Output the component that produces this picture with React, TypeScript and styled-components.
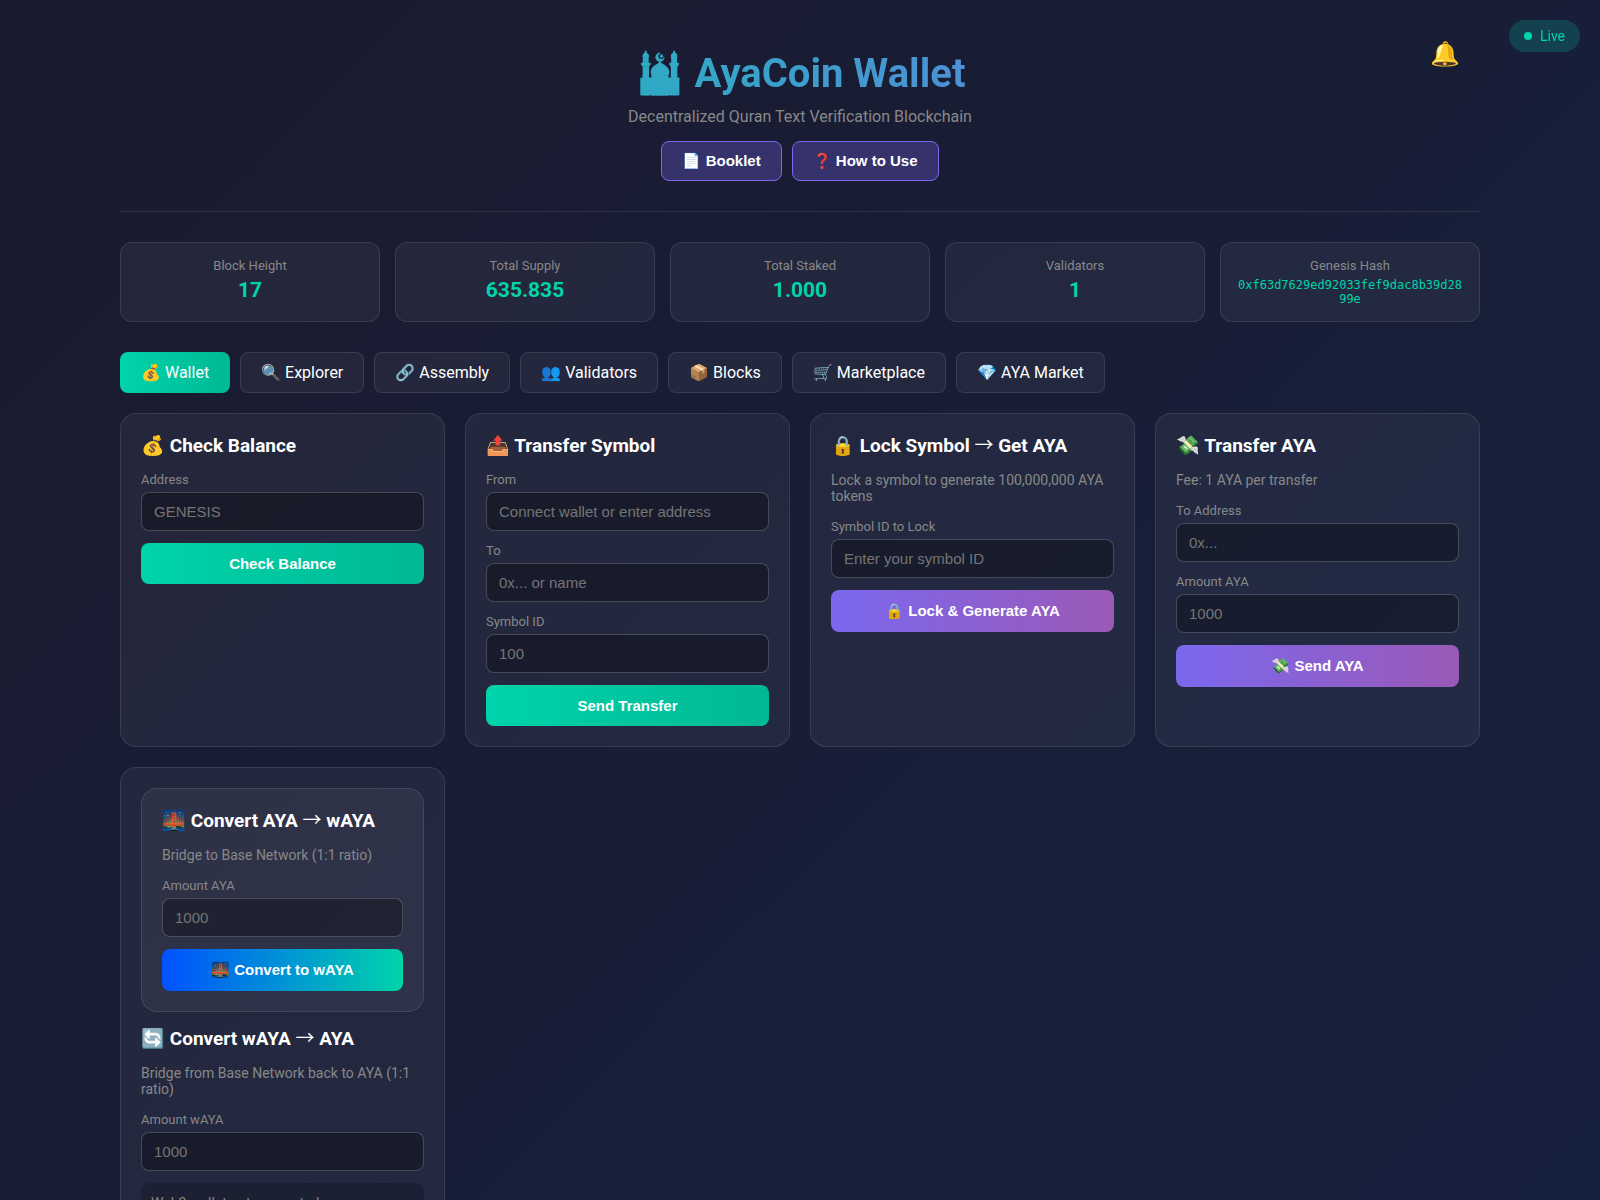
import React, { useId, useState } from "react";
import styled, { createGlobalStyle, css } from "styled-components";

const GlobalStyle = createGlobalStyle`
  * {
    box-sizing: border-box;
    margin: 0;
    padding: 0;
  }
  body {
    min-height: 100vh;
    background: linear-gradient(135deg, #1a1a2e 0%, #16213e 100%);
    color: #fff;
    font-family: Roboto, "Liberation Sans", sans-serif;
    font-size: 16px;
  }
`;

const Container = styled.div`
  max-width: 1400px;
  margin: 0 auto;
  padding: 20px;
`;

const LiveBadge = styled.div`
  position: fixed;
  top: 20px;
  right: 20px;
  display: flex;
  align-items: center;
  gap: 8px;
  padding: 8px 15px;
  border-radius: 20px;
  background: rgba(0, 212, 170, 0.2);
  color: #00d4aa;
  font-size: 14px;
  line-height: 16px;
`;

const LiveDot = styled.span`
  width: 8px;
  height: 8px;
  border-radius: 50%;
  background: #00d4aa;
`;

const Header = styled.header`
  position: relative;
  padding: 30px 0;
  border-bottom: 1px solid rgba(255, 255, 255, 0.1);
  text-align: center;
`;

const BellButton = styled.button`
  position: absolute;
  top: 20px;
  right: 20px;
  border: none;
  background: none;
  color: #fff;
  font-family: Roboto, sans-serif;
  font-size: 24px;
  line-height: 28px;
  cursor: pointer;
`;

const Title = styled.h1`
  margin-bottom: 10px;
  background: linear-gradient(90deg, #00d4aa, #7b68ee);
  background-clip: text;
  -webkit-background-clip: text;
  -webkit-text-fill-color: transparent;
  font-size: 40px;
  line-height: 47px;
`;

const Subtitle = styled.p`
  color: #888;
  line-height: 19px;
`;

const HeaderLinks = styled.div`
  display: flex;
  justify-content: center;
  gap: 10px;
  margin-top: 15px;
`;

const HeaderButton = styled.button`
  padding: 10px 20px;
  border: 1px solid #7b68ee;
  border-radius: 8px;
  background: rgba(123, 104, 238, 0.3);
  color: #fff;
  font-family: "Liberation Sans", Arial, sans-serif;
  font-size: 15px;
  font-weight: 600;
  line-height: 18px;
  cursor: pointer;
`;

const Stats = styled.section`
  display: grid;
  grid-template-columns: repeat(auto-fit, minmax(200px, 1fr));
  gap: 15px;
  margin: 30px 0;
`;

const Stat = styled.div`
  padding: 15px;
  border: 1px solid rgba(255, 255, 255, 0.1);
  border-radius: 12px;
  background: rgba(255, 255, 255, 0.05);
  text-align: center;
`;

const StatLabel = styled.div`
  margin-bottom: 5px;
  color: #888;
  font-size: 13px;
  line-height: 15px;
`;

const StatValue = styled.div<{ $hash?: boolean }>`
  color: #00d4aa;
  font-size: 21px;
  font-weight: 700;
  line-height: 24px;
  ${(p) =>
    p.$hash &&
    css`
      font-family: "DejaVu Sans Mono", monospace;
      font-size: 12px;
      font-weight: 400;
      line-height: 14px;
      word-break: break-all;
    `}
`;

const Tabs = styled.nav`
  display: flex;
  flex-wrap: wrap;
  gap: 10px;
  margin-bottom: 20px;
`;

const Tab = styled.button<{ $active: boolean }>`
  padding: 10px 20px;
  border: 1px solid ${(p) => (p.$active ? "transparent" : "rgba(255, 255, 255, 0.1)")};
  border-radius: 8px;
  background: ${(p) =>
    p.$active
      ? "linear-gradient(90deg, #00d4aa, #00b894) border-box"
      : "rgba(255, 255, 255, 0.05)"};
  color: #fff;
  font-family: Roboto, sans-serif;
  font-size: 16px;
  line-height: 19px;
  cursor: pointer;
`;

const CardGrid = styled.main`
  display: grid;
  grid-template-columns: repeat(auto-fill, minmax(300px, 1fr));
  gap: 20px;
`;

const Card = styled.section`
  padding: 20px;
  border: 1px solid rgba(255, 255, 255, 0.1);
  border-radius: 16px;
  background: rgba(255, 255, 255, 0.05);
  & > & {
    margin-bottom: 15px;
  }
`;

const CardTitle = styled.h2`
  margin-bottom: 15px;
  font-size: 19px;
  line-height: 23px;
`;

const Arrow = styled.span`
  font-family: "Noto Sans CJK SC", sans-serif;
  font-weight: 400;
  line-height: 0;
`;

const CardNote = styled.p`
  margin-bottom: 15px;
  color: #888;
  font-size: 14px;
  line-height: 16px;
`;

const FieldLabel = styled.label`
  display: block;
  margin-bottom: 5px;
  color: #888;
  font-size: 13px;
  line-height: 15px;
`;

const FieldInput = styled.input`
  display: block;
  width: 100%;
  margin-bottom: 12px;
  padding: 10px 12px;
  border: 1px solid rgba(255, 255, 255, 0.2);
  border-radius: 8px;
  background: rgba(0, 0, 0, 0.3);
  color: #fff;
  font-family: "Liberation Sans", Arial, sans-serif;
  font-size: 15px;
  line-height: 17px;
`;

const gradients = {
  green: "linear-gradient(90deg, #00d4aa, #00b894)",
  purple: "linear-gradient(90deg, #7b68ee, #9b59b6)",
  blue: "linear-gradient(90deg, #0052ff, #00d4aa)",
};

const ActionButton = styled.button<{ $tone: keyof typeof gradients }>`
  display: block;
  width: 100%;
  padding: 12px;
  border: none;
  border-radius: 8px;
  background: ${(p) => gradients[p.$tone]};
  color: #fff;
  font-family: "Liberation Sans", Arial, sans-serif;
  font-size: 15px;
  font-weight: 600;
  cursor: pointer;
`;

const WalletStatus = styled.div`
  margin-bottom: 12px;
  padding: 12px 10px;
  border-radius: 8px;
  background: rgba(0, 0, 0, 0.2);
  color: #888;
  font-size: 14px;
  line-height: 16px;
`;

function Field({ label, placeholder }: { label: string; placeholder: string }) {
  const id = useId();
  return (
    <>
      <FieldLabel htmlFor={id}>{label}</FieldLabel>
      <FieldInput id={id} type="text" placeholder={placeholder} />
    </>
  );
}

const stats = [
  { label: "Block Height", value: "17" },
  { label: "Total Supply", value: "635.835" },
  { label: "Total Staked", value: "1.000" },
  { label: "Validators", value: "1" },
  { label: "Genesis Hash", value: "0xf63d7629ed92033fef9dac8b39d2899e", hash: true },
];

const tabs = [
  "💰 Wallet",
  "🔍 Explorer",
  "🔗 Assembly",
  "👥 Validators",
  "📦 Blocks",
  "🛒 Marketplace",
  "💎 AYA Market",
];

export default function App() {
  const [activeTab, setActiveTab] = useState(tabs[0]);

  return (
    <>
      <GlobalStyle />
      <LiveBadge>
        <LiveDot />
        Live
      </LiveBadge>
      <Container>
        <Header>
          <BellButton type="button" aria-label="Notifications">🔔</BellButton>
          <Title>🕌 AyaCoin Wallet</Title>
          <Subtitle>Decentralized Quran Text Verification Blockchain</Subtitle>
          <HeaderLinks>
            <HeaderButton type="button">📄 Booklet</HeaderButton>
            <HeaderButton type="button">❓ How to Use</HeaderButton>
          </HeaderLinks>
        </Header>

        <Stats>
          {stats.map((s) => (
            <Stat key={s.label}>
              <StatLabel>{s.label}</StatLabel>
              <StatValue $hash={s.hash}>{s.value}</StatValue>
            </Stat>
          ))}
        </Stats>

        <Tabs>
          {tabs.map((tab) => (
            <Tab key={tab} type="button" $active={tab === activeTab} onClick={() => setActiveTab(tab)}>
              {tab}
            </Tab>
          ))}
        </Tabs>

        <CardGrid>
          <Card>
            <CardTitle>💰 Check Balance</CardTitle>
            <Field label="Address" placeholder="GENESIS" />
            <ActionButton type="button" $tone="green">Check Balance</ActionButton>
          </Card>

          <Card>
            <CardTitle>📤 Transfer Symbol</CardTitle>
            <Field label="From" placeholder="Connect wallet or enter address" />
            <Field label="To" placeholder="0x... or name" />
            <Field label="Symbol ID" placeholder="100" />
            <ActionButton type="button" $tone="green">Send Transfer</ActionButton>
          </Card>

          <Card>
            <CardTitle>🔒 Lock Symbol <Arrow>→</Arrow> Get AYA</CardTitle>
            <CardNote>Lock a symbol to generate 100,000,000 AYA tokens</CardNote>
            <Field label="Symbol ID to Lock" placeholder="Enter your symbol ID" />
            <ActionButton type="button" $tone="purple">🔒 Lock &amp; Generate AYA</ActionButton>
          </Card>

          <Card>
            <CardTitle>💸 Transfer AYA</CardTitle>
            <CardNote>Fee: 1 AYA per transfer</CardNote>
            <Field label="To Address" placeholder="0x..." />
            <Field label="Amount AYA" placeholder="1000" />
            <ActionButton type="button" $tone="purple">💸 Send AYA</ActionButton>
          </Card>

          <Card>
            <Card>
              <CardTitle>🌉 Convert AYA <Arrow>→</Arrow> wAYA</CardTitle>
              <CardNote>Bridge to Base Network (1:1 ratio)</CardNote>
              <Field label="Amount AYA" placeholder="1000" />
              <ActionButton type="button" $tone="blue">🌉 Convert to wAYA</ActionButton>
            </Card>
            <CardTitle>🔄 Convert wAYA <Arrow>→</Arrow> AYA</CardTitle>
            <CardNote>Bridge from Base Network back to AYA (1:1 ratio)</CardNote>
            <Field label="Amount wAYA" placeholder="1000" />
            <WalletStatus>Web3 wallet not connected</WalletStatus>
            <ActionButton type="button" $tone="blue">🔄 Convert to AYA</ActionButton>
          </Card>
        </CardGrid>
      </Container>
    </>
  );
}
